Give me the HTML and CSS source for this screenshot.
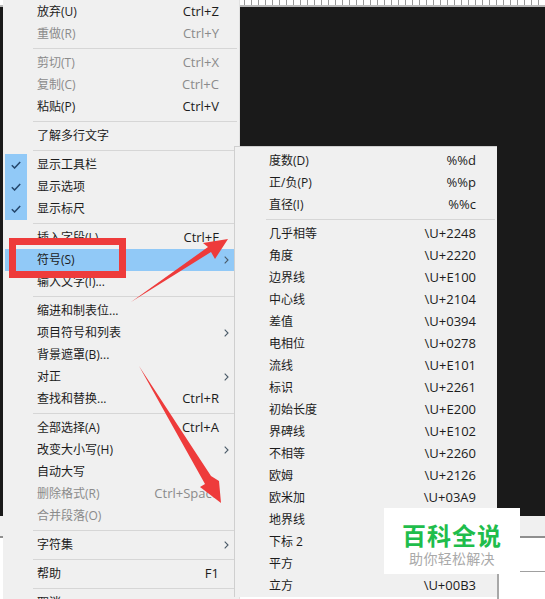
FILE: index.html
```html
<!DOCTYPE html>
<html lang="zh">
<head>
<meta charset="utf-8">
<title>多行文字菜单</title>
<link rel="stylesheet" href="styles.css">
</head>
<body>
<div class="stage">
  <div class="backdrop">
    <div class="ruler"></div>
    <div class="canvas"></div>
    <div class="pane">
      <div class="pane-strip"></div>
      <div class="pane-field"></div>
      <div class="pane-field"></div>
    </div>
  </div>

  <div class="menu main">
    <div class="row"><i class="cell"></i><span class="label">放弃(U)</span><span class="key">Ctrl+Z</span></div>
    <div class="row off"><i class="cell"></i><span class="label">重做(R)</span><span class="key">Ctrl+Y</span></div>
    <div class="sep"></div>
    <div class="row off"><i class="cell"></i><span class="label">剪切(T)</span><span class="key">Ctrl+X</span></div>
    <div class="row off"><i class="cell"></i><span class="label">复制(C)</span><span class="key">Ctrl+C</span></div>
    <div class="row"><i class="cell"></i><span class="label">粘贴(P)</span><span class="key">Ctrl+V</span></div>
    <div class="sep"></div>
    <div class="row"><i class="cell"></i><span class="label">了解多行文字</span></div>
    <div class="sep"></div>
    <div class="row"><i class="cell on"><svg class="tick" viewBox="0 0 10 8"><path d="M.8 4.2 3.6 7 9.2 1"/></svg></i><span class="label">显示工具栏</span></div>
    <div class="row"><i class="cell on"><svg class="tick" viewBox="0 0 10 8"><path d="M.8 4.2 3.6 7 9.2 1"/></svg></i><span class="label">显示选项</span></div>
    <div class="row"><i class="cell on"><svg class="tick" viewBox="0 0 10 8"><path d="M.8 4.2 3.6 7 9.2 1"/></svg></i><span class="label">显示标尺</span></div>
    <div class="sep"></div>
    <div class="row"><i class="cell"></i><span class="label">插入字段(L)...</span><span class="key">Ctrl+F</span></div>
    <div class="row active"><i class="cell"></i><span class="label">符号(S)</span><svg class="chev" viewBox="0 0 5 8"><path d="M.7.7 4 4 .7 7.3"/></svg></div>
    <div class="row"><i class="cell"></i><span class="label">输入文字(I)...</span></div>
    <div class="sep"></div>
    <div class="row"><i class="cell"></i><span class="label">缩进和制表位...</span></div>
    <div class="row"><i class="cell"></i><span class="label">项目符号和列表</span><svg class="chev" viewBox="0 0 5 8"><path d="M.7.7 4 4 .7 7.3"/></svg></div>
    <div class="row"><i class="cell"></i><span class="label">背景遮罩(B)...</span></div>
    <div class="row"><i class="cell"></i><span class="label">对正</span><svg class="chev" viewBox="0 0 5 8"><path d="M.7.7 4 4 .7 7.3"/></svg></div>
    <div class="row"><i class="cell"></i><span class="label">查找和替换...</span><span class="key">Ctrl+R</span></div>
    <div class="sep"></div>
    <div class="row"><i class="cell"></i><span class="label">全部选择(A)</span><span class="key">Ctrl+A</span></div>
    <div class="row"><i class="cell"></i><span class="label">改变大小写(H)</span><svg class="chev" viewBox="0 0 5 8"><path d="M.7.7 4 4 .7 7.3"/></svg></div>
    <div class="row"><i class="cell"></i><span class="label">自动大写</span></div>
    <div class="row off"><i class="cell"></i><span class="label">删除格式(R)</span><span class="key">Ctrl+Space</span></div>
    <div class="row off"><i class="cell"></i><span class="label">合并段落(O)</span></div>
    <div class="sep"></div>
    <div class="row"><i class="cell"></i><span class="label">字符集</span><svg class="chev" viewBox="0 0 5 8"><path d="M.7.7 4 4 .7 7.3"/></svg></div>
    <div class="sep"></div>
    <div class="row"><i class="cell"></i><span class="label">帮助</span><span class="key">F1</span></div>
    <div class="sep"></div>
    <div class="row"><i class="cell"></i><span class="label">取消</span></div>
  </div>

  <div class="menu sub">
    <div class="row"><span class="label">度数(D)</span><span class="key">%%d</span></div>
    <div class="row"><span class="label">正/负(P)</span><span class="key">%%p</span></div>
    <div class="row"><span class="label">直径(I)</span><span class="key">%%c</span></div>
    <div class="sep"></div>
    <div class="row"><span class="label">几乎相等</span><span class="key">\U+2248</span></div>
    <div class="row"><span class="label">角度</span><span class="key">\U+2220</span></div>
    <div class="row"><span class="label">边界线</span><span class="key">\U+E100</span></div>
    <div class="row"><span class="label">中心线</span><span class="key">\U+2104</span></div>
    <div class="row"><span class="label">差值</span><span class="key">\U+0394</span></div>
    <div class="row"><span class="label">电相位</span><span class="key">\U+0278</span></div>
    <div class="row"><span class="label">流线</span><span class="key">\U+E101</span></div>
    <div class="row"><span class="label">标识</span><span class="key">\U+2261</span></div>
    <div class="row"><span class="label">初始长度</span><span class="key">\U+E200</span></div>
    <div class="row"><span class="label">界碑线</span><span class="key">\U+E102</span></div>
    <div class="row"><span class="label">不相等</span><span class="key">\U+2260</span></div>
    <div class="row"><span class="label">欧姆</span><span class="key">\U+2126</span></div>
    <div class="row"><span class="label">欧米加</span><span class="key">\U+03A9</span></div>
    <div class="row"><span class="label">地界线</span></div>
    <div class="row"><span class="label">下标 2</span></div>
    <div class="row"><span class="label">平方</span></div>
    <div class="row"><span class="label">立方</span><span class="key">\U+00B3</span></div>
  </div>

  <div class="callout"></div>
  <svg class="arrows" viewBox="0 0 545 599">
    <path d="M131 302 208 247 203 243 228 239 215 259 211 252Z"/>
    <path d="M139 366 211 476 219 481 221 503 200 487 205 484Z"/>
  </svg>

  <div class="mark">
    <div class="mark-title">百科全说</div>
    <div class="mark-sub">助你轻松解决</div>
  </div>
</div>
</body>
</html>
```
FILE: styles.css
```css
* { box-sizing: border-box; }
html, body { margin: 0; padding: 0; height: 100%; overflow: hidden; }
body {
  font-family: "Open Sans", "Noto Sans CJK SC", sans-serif;
  font-size: 12px;
  color: #1c1c1c;
  background: #fff;
}

.stage { position: relative; width: 545px; height: 599px; overflow: hidden; }

/* Window behind the menus */
.backdrop { display: flex; flex-direction: column; height: 100%; background: #1a1a1a; }
.ruler {
  height: 7px;
  border-bottom: 2px solid #b9b9b9;
  background: repeating-linear-gradient(90deg, #fff 0 6px, #999 6px 7px);
}
.canvas { flex: 1; }
.pane { height: 83px; background: #fff; }
.pane-strip { height: 22px; background: #f0f0f0; border-bottom: 2px solid #8f8f8f; }
.pane-field { height: 34px; margin-left: 497px; border-left: 2px solid #a8a8a8; border-bottom: 1px solid #a0a0a0; }

/* Menus */
.menu { position: absolute; background: #f0f0f0; }
.main { left: 3px; top: 0; width: 237px; padding: 1px 0 0 2px; border-right: 1px solid #e0e0e0; }
.sub {
  left: 234px; top: 146px; width: 263px;
  padding: 3px 0 0 34px;
  border: 1px solid #cfcfcf;
  border-right: 0;
  border-bottom: 0;
}

.row { display: flex; align-items: center; height: 22px; white-space: nowrap; }
.label { flex: 1; margin-bottom: 2px; }
.key { text-align: right; font-size: 13px; margin-bottom: 2px; }
.main .key { margin-right: 20px; }
.sub .key { margin-right: 21px; }
.off { color: #8b8b8b; }
.active { background: #91c9f7; }

.cell { flex: none; display: flex; align-items: center; justify-content: center; width: 22px; height: 22px; margin-right: 10px; }
.on { background: #91c9f7; }
.tick { width: 10px; height: 8px; fill: none; stroke: #24466b; stroke-width: 1.5; }
.chev { flex: none; width: 5px; height: 8px; margin-right: 10px; fill: none; stroke: #4a5a68; stroke-width: 1.1; }

.sep { height: 7px; padding-top: 3px; margin-left: 28px; margin-right: 2px; }
.sep::before { content: ""; display: block; height: 1px; background: #d6d6d6; }
.sub .sep { margin-left: -3px; margin-right: 2px; }

/* Annotations */
.callout { position: absolute; left: 9px; top: 238px; width: 117px; height: 40px; border: 7px solid #ee3b3b; }
.arrows { position: absolute; left: 0; top: 0; width: 545px; height: 599px; fill: #ee3b3b; }

.mark {
  position: absolute; left: 384px; top: 508px; width: 136px; height: 66px;
  background: #fff;
  display: flex; flex-direction: column; align-items: center;
  padding-top: 14px;
}
.mark-title { font-size: 24px; line-height: 28px; font-weight: 700; letter-spacing: 1px; color: #1fbd4c; }
.mark-sub { font-size: 14px; line-height: 18px; letter-spacing: .3px; color: #a9a9a9; }
```
